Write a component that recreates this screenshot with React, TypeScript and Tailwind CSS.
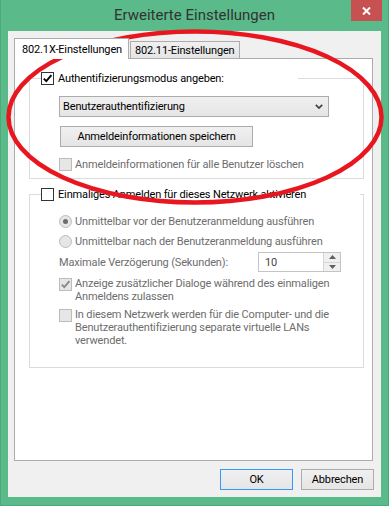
import React from "react";

function Box({ checked = false, disabled = false }: { checked?: boolean; disabled?: boolean }) {
  return (
    <span
      className={
        "flex h-[13px] w-[13px] shrink-0 items-center justify-center border " +
        (disabled ? "border-[#bcbcbc] bg-[#e6e6e6]" : "border-[#333333] bg-white")
      }
    >
      {checked && (
        <svg width="11" height="11" viewBox="0 0 11 11">
          <path
            d="M1.8 5.6 L4.3 8.2 L9.4 2.2"
            fill="none"
            stroke={disabled ? "#8a8a8a" : "#000"}
            strokeWidth="1.9"
          />
        </svg>
      )}
    </span>
  );
}

function Radio({ selected = false }: { selected?: boolean }) {
  return (
    <span className="flex h-[13px] w-[13px] shrink-0 items-center justify-center rounded-full border border-[#bcbcbc] bg-[#e6e6e6]">
      {selected && <span className="h-[5px] w-[5px] rounded-full bg-[#6d6d6d]" />}
    </span>
  );
}

function WinButton({ children, className = "" }: { children: React.ReactNode; className?: string }) {
  return (
    <div
      className={
        "flex h-[21px] items-center justify-center border bg-gradient-to-b from-[#f0f0f0] to-[#e5e5e5] text-black " +
        className
      }
    >
      {children}
    </div>
  );
}

export default function App() {
  return (
    <div className="relative h-[506px] w-[389px] overflow-hidden border-x border-b border-[#4fa77c] bg-[#5aba8a] font-['Roboto',sans-serif] text-[11px] leading-[13px] tracking-[-0.15px] text-black">
      {/* title bar */}
      <div className="grid h-[31px] grid-cols-[1fr_auto_1fr]">
        <div />
        <div className="self-center pb-[2px] text-[15px] leading-[18px] tracking-normal text-[#333333]">Erweiterte Einstellungen</div>
        <div className="flex justify-end pr-[6px]">
          <div className="flex h-[21px] w-[31px] items-center justify-center bg-[#c75050]">
            <svg width="9" height="8" viewBox="0 0 9 8">
              <path d="M1 0.5 L8 7.5 M8 0.5 L1 7.5" stroke="#fff" strokeWidth="2" />
            </svg>
          </div>
        </div>
      </div>

      {/* client area */}
      <div className="mx-[7px] flex h-[466px] flex-col bg-[#f0f0f0] pt-[7px]">
        {/* tabs */}
        <div className="flex h-[20px] items-end pl-[6px]">
          <div className="relative z-10 -mb-px flex h-[21px] w-[115px] items-center border border-b-0 border-[#acacac] bg-white pl-[7px]">
            802.1X-Einstellungen
          </div>
          <div className="ml-px flex h-[17px] w-[110px] items-center border border-b-0 border-[#acacac] bg-gradient-to-b from-[#f0f0f0] to-[#e5e5e5] pl-[4px]">
            802.11-Einstellungen
          </div>
        </div>

        {/* tab panel */}
        <div className="ml-[6px] flex h-[403px] w-[359px] flex-col border border-[#acacac] bg-white pl-[14px] pt-[13px]">
          {/* group 1 */}
          <fieldset className="w-[335px] border border-[#dcdcdc]">
            <legend className="ml-[11px] w-[257px]">
              <div className="flex h-[13px] items-center gap-[4px]">
                <Box checked />
                <span>Authentifizierungsmodus angeben:</span>
              </div>
            </legend>
            <div className="flex flex-col pb-[7px] pl-[29px]">
              <div className="mt-[11px] flex h-[21px] w-[270px] items-center justify-between border border-[#acacac] bg-gradient-to-b from-[#f0f0f0] to-[#e5e5e5] pl-[3px] pr-[5px]">
                <span>Benutzerauthentifizierung</span>
                <svg width="8" height="5" viewBox="0 0 8 5">
                  <path d="M0.8 0.8 L4 4 L7.2 0.8" fill="none" stroke="#404040" strokeWidth="1.7" />
                </svg>
              </div>
              <WinButton className="mt-[9px] w-[193px] border-[#acacac] ml-px">
                Anmeldeinformationen speichern
              </WinButton>
              <div className="mt-[11px] flex h-[13px] items-center gap-[3px] text-[#6d6d6d]">
                <Box disabled />
                <span>Anmeldeinformationen für alle Benutzer löschen</span>
              </div>
            </div>
          </fieldset>

          {/* group 2 */}
          <fieldset className="mt-[9px] w-[335px] border border-[#dcdcdc]">
            <legend className="ml-[11px] w-[319px]">
              <div className="flex h-[13px] items-center gap-[4px]">
                <Box />
                <span>Einmaliges Anmelden für dieses Netzwerk aktivieren</span>
              </div>
            </legend>
            <div className="flex flex-col pb-[20px] pl-[29px] text-[#6d6d6d]">
              <div className="mt-[14px] flex h-[13px] items-center gap-[3px]">
                <Radio selected />
                <span>Unmittelbar vor der Benutzeranmeldung ausführen</span>
              </div>
              <div className="mt-[7px] flex h-[13px] items-center gap-[3px]">
                <Radio />
                <span>Unmittelbar nach der Benutzeranmeldung ausführen</span>
              </div>
              <div className="mt-[4px] flex h-[20px] items-center">
                <span className="w-[199px]">Maximale Verzögerung (Sekunden):</span>
                <div className="flex h-[20px] w-[83px] items-stretch border border-[#c4c4c4] bg-white">
                  <span className="flex flex-1 items-center pl-[6px] text-[#444444]">10</span>
                  <div className="flex w-[17px] flex-col border-l border-[#d6d6d6]">
                    <div className="flex flex-1 items-center justify-center border-b border-[#d6d6d6] bg-[#f0f0f0]">
                      <svg width="7" height="4" viewBox="0 0 7 4">
                        <path d="M0 4 L3.5 0 L7 4 Z" fill="#606060" />
                      </svg>
                    </div>
                    <div className="flex flex-1 items-center justify-center bg-[#f0f0f0]">
                      <svg width="7" height="4" viewBox="0 0 7 4">
                        <path d="M0 0 L3.5 4 L7 0 Z" fill="#606060" />
                      </svg>
                    </div>
                  </div>
                </div>
              </div>
              <div className="mt-[6px] flex items-start gap-[3px]">
                <Box checked disabled />
                <span className="-mt-[1px]">
                  Anzeige zusätzlicher Dialoge während des einmaligen
                  <br />
                  Anmeldens zulassen
                </span>
              </div>
              <div className="mt-[6px] flex items-start gap-[3px]">
                <Box disabled />
                <span className="-mt-[1px]">
                  In diesem Netzwerk werden für die Computer- und die
                  <br />
                  Benutzerauthentifizierung separate virtuelle LANs
                  <br />
                  verwendet.
                </span>
              </div>
            </div>
          </fieldset>
        </div>

        {/* buttons */}
        <div className="mt-[8px] flex justify-end gap-[8px] pr-[7px]">
          <WinButton className="w-[73px] border-[#3399ff]">OK</WinButton>
          <WinButton className="w-[73px] border-[#acacac]">Abbrechen</WinButton>
        </div>
      </div>

      {/* red annotation ellipse */}
      <svg className="pointer-events-none absolute left-0 top-0" width="389" height="506" viewBox="0 0 389 506">
        <ellipse cx="194" cy="117" rx="186.5" ry="85.5" fill="none" stroke="#e8161f" strokeWidth="4.5" />
      </svg>
    </div>
  );
}
